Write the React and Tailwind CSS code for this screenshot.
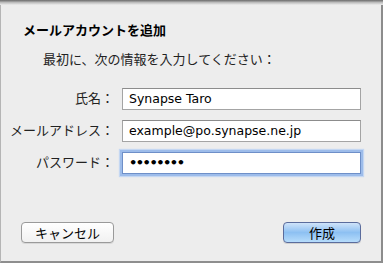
import React from 'react';

const jp = { fontFamily: '"Noto Sans CJK JP", "Noto Sans", sans-serif' };
const latin = { fontFamily: '"DejaVu Sans", "Noto Sans CJK JP", sans-serif' };

const Field = ({ label, value, type = 'text', focused }) => (
  <div className="flex items-center h-[32px]">
    <label className="w-[113px] text-right text-[13px] text-[#222] leading-none" style={jp}>
      {label}
    </label>
    <div className="ml-[8px]">
      <input
        type={type}
        readOnly
        value={value}
        className={`w-[239px] h-[22px] bg-white px-[6px] text-black outline-none border ${
          focused
            ? 'text-[13px] font-bold tracking-[-1.5px] border-[#6e8fc8] shadow-[0_0_0_2px_#9dbcea,0_0_1px_3px_#c4d7f2]'
            : 'text-[12.5px] border-[#a4a4a4] border-t-[#8c8c8c]'
        }`}
        style={latin}
      />
    </div>
  </div>
);

export default function App() {
  return (
    <div className="w-[383px] h-[263px] bg-[#ededed] flex flex-col overflow-hidden" style={jp}>
      {/* top shadow */}
      <div className="h-[5px] bg-gradient-to-b from-[#6b6b6b] via-[#bdbdbd] to-[#ededed] shrink-0" />

      <div className="flex-1 flex flex-col border-l border-l-[#b5b5b5] border-r-2 border-r-[#8c8c8c] border-b-2 border-b-[#8e8e8e]">
        <div className="pl-[22px] pt-[17px] text-[13px] font-bold text-black leading-[16px]">
          メールアカウントを追加
        </div>
        <div className="pl-[42px] pt-[13px] text-[13px] text-[#222] leading-[16px]">
          最初に、次の情報を入力してください：
        </div>

        <div className="mt-[14px] flex flex-col">
          <Field label="氏名：" value="Synapse Taro" />
          <Field label="メールアドレス：" value="example@po.synapse.ne.jp" />
          <Field label="パスワード：" value="12345678" type="password" focused />
        </div>

        <div className="mt-auto mb-[18px] flex justify-between pl-[20px] pr-[20px]">
          <button className="w-[93px] h-[21px] rounded-[4px] border border-[#9a9a9a] bg-gradient-to-b from-white to-[#f1f1f1] text-[13px] text-black leading-none shadow-[0_1px_0_#d8d8d8]">
            キャンセル
          </button>
          <button className="w-[78px] h-[21px] rounded-[4px] border border-[#5b6c9c] bg-gradient-to-b from-[#cfe3f9] via-[#8dc0f2] to-[#b6dcfb] text-[13px] text-black leading-none shadow-[0_1px_0_#d0d0d0]">
            作成
          </button>
        </div>
      </div>
    </div>
  );
}
